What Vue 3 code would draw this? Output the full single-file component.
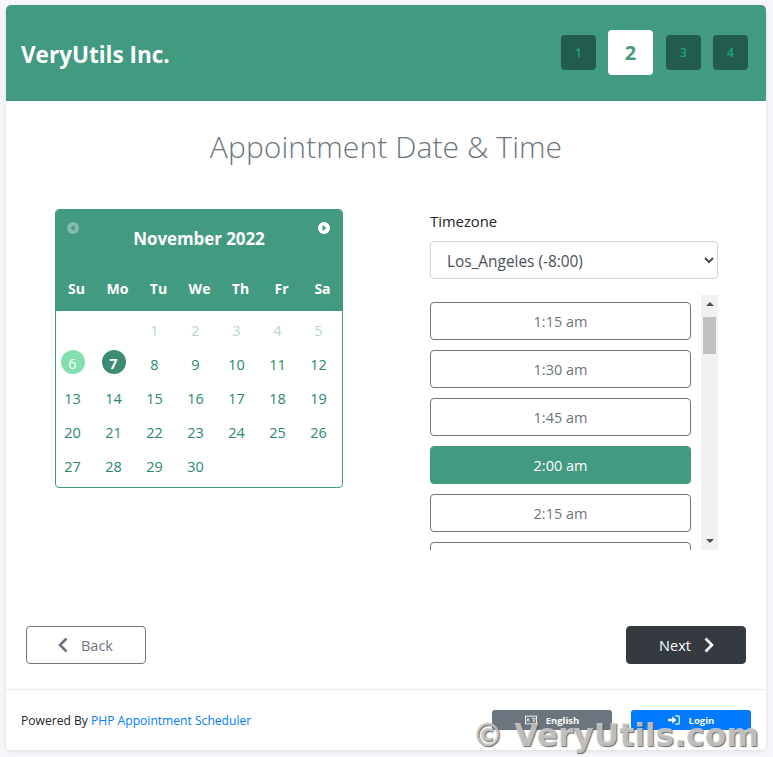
<template>
  <div class="page">
    <div class="card">
      <header class="head">
        <div class="brand">VeryUtils Inc.</div>
        <div class="steps">
          <div v-for="s in steps" :key="s" class="step" :class="{ current: s === 2 }">{{ s }}</div>
        </div>
      </header>

      <h1 class="title">Appointment Date &amp; Time</h1>

      <div class="columns">
        <div class="calendar">
          <div class="cal-head">
            <div class="cal-nav">
              <svg class="nav-icon faded" viewBox="0 0 12 12"><circle cx="6" cy="6" r="6" fill="#fff" /><path d="M7.500 3v6L3.500 6z" fill="#429a80" /></svg>
              <svg class="nav-icon" viewBox="0 0 12 12"><circle cx="6" cy="6" r="6" fill="#fff" /><path d="M4.500 3v6l4-3z" fill="#429a80" /></svg>
            </div>
            <div class="month">November 2022</div>
            <div class="weekdays">
              <span v-for="d in weekdays" :key="d">{{ d }}</span>
            </div>
          </div>
          <div class="days">
            <span v-for="(d, i) in days" :key="i" class="day" :class="d.cls">
              <b v-if="d.n">{{ d.n }}</b>
            </span>
          </div>
        </div>

        <div class="picker">
          <label class="zone-label">Timezone</label>
          <select class="zone">
            <option>Los_Angeles (-8:00)</option>
          </select>
          <div class="slot-row">
            <div class="slots">
              <button v-for="t in times" :key="t" class="slot" :class="{ active: t === '2:00 am' }">{{ t }}</button>
            </div>
            <div class="scrollbar">
              <span class="arrow up"></span>
              <span class="thumb"></span>
              <span class="arrow down"></span>
            </div>
          </div>
        </div>
      </div>

      <div class="actions">
        <button class="btn back">
          <svg class="chev" viewBox="0 0 12 18"><path d="M9.500 2.500 3 9l6.500 6.500" /></svg>
          Back
        </button>
        <button class="btn next">
          Next
          <svg class="chev" viewBox="0 0 12 18"><path d="M2.500 2.500 9 9l-6.500 6.500" /></svg>
        </button>
      </div>

      <footer class="foot">
        <div class="powered">Powered By <a href="#" @click.prevent>PHP Appointment Scheduler</a></div>
        <div class="foot-btns">
          <button class="mini grey">
            <svg class="mini-icon" viewBox="0 0 14 10"><rect x="0.500" y="0.500" width="13" height="9" fill="none" stroke="#fff" /><path d="M2 7l1.500-4L5 7M8 3h4M10 3v1M9 7c1.500-.8 2.500-2 2.800-3.500M9 4.500c.6 1.200 1.500 2 3 2.500" fill="none" stroke="#fff" stroke-width=".9" /></svg>
            English
          </button>
          <button class="mini blue">
            <svg class="mini-icon" viewBox="0 0 14 12"><path d="M0 4.500h5V1.500L10 6l-5 4.500v-3H0z" fill="#fff" /><path d="M8.500 1H12a1.300 1.300 0 0 1 1.300 1.300v7.400A1.300 1.300 0 0 1 12 11H8.500" fill="none" stroke="#fff" stroke-width="1.500" /></svg>
            Login
          </button>
        </div>
      </footer>
    </div>
    <div class="watermark">© VeryUtils.com</div>
  </div>
</template>

<script setup>
const steps = [1, 2, 3, 4]
const weekdays = ['Su', 'Mo', 'Tu', 'We', 'Th', 'Fr', 'Sa']

const days = []
for (let i = 0; i < 2; i++) days.push({ n: 0, cls: '' })
for (let n = 1; n <= 30; n++) {
  let cls = ''
  if (n < 6) cls = 'past'
  if (n === 6) cls = 'today'
  if (n === 7) cls = 'selected'
  days.push({ n, cls })
}

const times = ['1:15 am', '1:30 am', '1:45 am', '2:00 am', '2:15 am', '2:30 am']
</script>

<style>
html, body {
  margin: 0;
  background: #f4f6f9;
}
</style>

<style scoped>
.page {
  position: relative;
  height: 757px;
  padding: 5px 7px 0 6px;
  box-sizing: border-box;
  overflow: hidden;
  font-family: "Open Sans", "Noto Sans", sans-serif;
  color: #212529;
}

.card {
  height: 745px;
  background: #fff;
  border-radius: 5px;
  overflow: hidden;
  box-shadow: 0 1px 4px rgba(0, 0, 0, 0.1);
  display: flex;
  flex-direction: column;
}

.head {
  height: 96px;
  box-sizing: border-box;
  flex: none;
  background: #429a80;
  display: flex;
  align-items: center;
  justify-content: space-between;
  padding: 0 18px 1px 15px;
}

.brand {
  color: #fff;
  font-size: 22.500px;
  font-weight: 700;
  padding-top: 4px;
}

.steps {
  display: flex;
  align-items: center;
  gap: 12px;
}

.step {
  width: 35px;
  height: 35px;
  border-radius: 4px;
  background: #225c4d;
  color: #19a57f;
  font-size: 12px;
  font-weight: 600;
  display: flex;
  align-items: center;
  justify-content: center;
}

.step.current {
  width: 45px;
  height: 45px;
  margin-right: 1px;
  background: #fff;
  color: #429a80;
  font-size: 20px;
  font-weight: 700;
}

.title {
  margin: 24px 0 0;
  height: 44px;
  line-height: 44px;
  text-align: center;
  font-size: 30px;
  font-weight: 300;
  color: #6c757d;
  letter-spacing: 0.08px;
}

.columns {
  display: flex;
  margin-top: 40px;
  padding-left: 49px;
  height: 417px;
  flex: none;
}

.calendar {
  width: 288px;
  height: 279px;
  box-sizing: border-box;
  border: 1px solid #429a80;
  border-radius: 4px;
  overflow: hidden;
}

.cal-head {
  height: 101px;
  background: #429a80;
  color: #fff;
}

.cal-nav {
  display: flex;
  justify-content: space-between;
  padding: 12px 12px 0 11px;
  height: 12px;
}

.nav-icon {
  width: 12px;
  height: 12px;
}

.nav-icon.faded {
  opacity: 0.35;
}

.month {
  text-align: center;
  font-size: 17px;
  font-weight: 700;
  line-height: 24px;
  margin-top: -7px;
  letter-spacing: -0.1px;
}

.weekdays {
  display: grid;
  grid-template-columns: repeat(7, 41px);
  margin-top: 27px;
  font-size: 14px;
  font-weight: 700;
  text-align: center;
  line-height: 22px;
}

.days {
  display: grid;
  grid-template-columns: repeat(7, 41px);
  grid-auto-rows: 34px;
  padding-top: 3px;
  margin-left: -4px;
  font-size: 14.500px;
  color: #2a8870;
}

.day {
  display: flex;
  align-items: center;
  justify-content: center;
}

.day b {
  font-weight: 400;
  width: 24px;
  height: 24px;
  line-height: 24px;
  border-radius: 50%;
  text-align: center;
}

.day.past {
  color: #b4d8cc;
}

.day.today b,
.day.selected b {
  line-height: 27px;
  margin-top: -6px;
  color: #fff;
}

.day.today b {
  background: #82e0ae;
}

.day.selected b {
  background: #3c8b74;
  font-weight: 700;
}

.picker {
  width: 288px;
  margin-left: 87px;
  display: flex;
  flex-direction: column;
}

.zone-label {
  font-size: 14.800px;
  line-height: 20px;
  margin-top: 2px;
}

.zone {
  width: 100%;
  height: 38px;
  margin-top: 10px;
  padding: 2px 12px 0;
  font: inherit;
  font-size: 15.400px;
  color: #495057;
  background: #fff;
  border: 1px solid #ced4da;
  border-radius: 4px;
}

.slot-row {
  display: flex;
  gap: 10px;
  height: 255px;
  margin-top: 16px;
}

.slots {
  width: 261px;
  padding-top: 7px;
  box-sizing: border-box;
  overflow: hidden;
  display: flex;
  flex-direction: column;
  gap: 10px;
}

.scrollbar {
  width: 17px;
  background: #f1f1f1;
  display: flex;
  flex-direction: column;
  align-items: center;
}

.arrow {
  width: 0;
  height: 0;
  border-left: 4px solid transparent;
  border-right: 4px solid transparent;
}

.arrow.up {
  margin-top: 7px;
  border-bottom: 4px solid #505050;
}

.arrow.down {
  margin-top: auto;
  margin-bottom: 7px;
  border-top: 4px solid #505050;
}

.thumb {
  width: 13px;
  height: 37px;
  margin-top: 11px;
  background: #c1c1c1;
}

.slot {
  flex: none;
  width: 261px;
  height: 38px;
  box-sizing: border-box;
  background: #fff;
  border: 1px solid #6c757d;
  border-radius: 4px;
  color: #6c757d;
  font: inherit;
  font-size: 14.500px;
  padding: 0;
}

.slot.active {
  background: #429a80;
  border-color: #429a80;
  color: #fff;
}

.actions {
  display: flex;
  justify-content: space-between;
  padding: 0 20px;
}

.btn {
  width: 120px;
  height: 38px;
  box-sizing: border-box;
  border-radius: 4px;
  font: inherit;
  font-size: 14.500px;
  display: flex;
  align-items: center;
  justify-content: center;
  gap: 10px;
  padding: 0;
}

.back {
  background: #fff;
  border: 1px solid #6c757d;
  color: #6c757d;
}

.back .chev {
  margin-left: -2px;
  margin-right: 2px;
}

.next {
  background: #343a40;
  border: 1px solid #343a40;
  color: #fff;
}

.next .chev {
  margin-left: 2px;
  margin-right: -2px;
}

.chev {
  width: 12px;
  height: 18px;
  fill: none;
  stroke: currentColor;
  stroke-width: 2.600;
}

.foot {
  margin-top: 25px;
  border-top: 1px solid #e9ecef;
  flex: 1;
  display: flex;
  justify-content: space-between;
  padding: 20px 15px 0;
}

.powered {
  font-size: 12.100px;
  line-height: 22px;
}

.powered a {
  color: #007bff;
  text-decoration: none;
}

.foot-btns {
  display: flex;
  gap: 19px;
}

.mini {
  width: 120px;
  height: 20px;
  border: 0;
  border-radius: 3px;
  color: #fff;
  font: inherit;
  font-size: 9.500px;
  font-weight: 700;
  display: flex;
  align-items: center;
  justify-content: center;
  gap: 9px;
  padding: 0;
}

.mini.grey {
  background: #6c757d;
}

.mini.blue {
  background: #007bff;
}

.mini-icon {
  width: 12px;
  height: 10px;
}

.watermark {
  position: absolute;
  left: 472px;
  top: 717px;
  font-family: "DejaVu Sans", sans-serif;
  font-weight: 700;
  font-size: 31.300px;
  line-height: 36px;
  white-space: nowrap;
  color: rgba(205, 205, 205, 0.85);
  text-shadow: 1px 1px 1px rgba(70, 70, 70, 0.8);
}
</style>
